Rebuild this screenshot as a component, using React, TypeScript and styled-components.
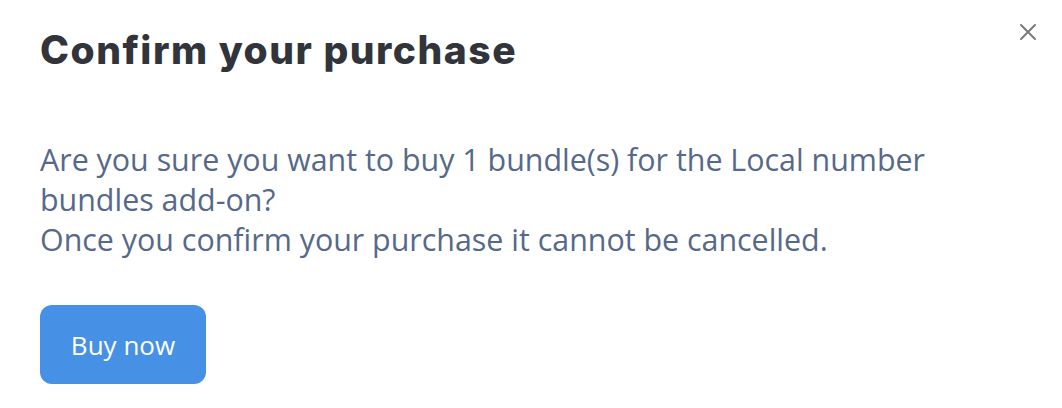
import React from "react";
import styled, { createGlobalStyle } from "styled-components";

const GlobalStyle = createGlobalStyle`
  html, body {
    margin: 0;
    padding: 0;
    background: #ffffff;
  }
`;

const Modal = styled.div`
  position: relative;
  width: 1062px;
  height: 408px;
  box-sizing: border-box;
  padding: 24px 40px 0 40px;
  background: #ffffff;
  display: flex;
  flex-direction: column;
`;

const Title = styled.h2`
  margin: 0;
  font-family: Inter, "Open Sans", sans-serif;
  font-weight: 800;
  font-size: 39px;
  line-height: 52px;
  color: #31343b;
  letter-spacing: 1.5px;
`;

const CloseButton = styled.button`
  position: absolute;
  top: 20px;
  right: 22px;
  width: 24px;
  height: 24px;
  padding: 0;
  border: none;
  background: transparent;
  cursor: pointer;
  display: flex;
  align-items: center;
  justify-content: center;
`;

const Message = styled.p`
  margin: 64px 0 0 0;
  font-family: "Open Sans", sans-serif;
  font-size: 30.4px;
  line-height: 40px;
  color: #56698a;
  max-width: 960px;
`;

const BuyButton = styled.button`
  margin-top: 45px;
  align-self: flex-start;
  width: 166px;
  height: 79px;
  border: none;
  border-radius: 12px;
  background: #4690e6;
  color: #ffffff;
  font-family: "Open Sans", sans-serif;
  font-size: 26px;
  cursor: pointer;
`;

const App: React.FC = () => {
  return (
    <>
      <GlobalStyle />
      <Modal>
        <CloseButton aria-label="Close">
          <svg width="18" height="18" viewBox="0 0 18 18">
            <path
              d="M2 2 L16 16 M16 2 L2 16"
              stroke="#7a7a7a"
              strokeWidth="2"
              strokeLinecap="round"
            />
          </svg>
        </CloseButton>
        <Title>Confirm your purchase</Title>
        <Message>
          Are you sure you want to buy 1 bundle(s) for the Local number
          bundles add-on?
          <br />
          Once you confirm your purchase it cannot be cancelled.
        </Message>
        <BuyButton>Buy now</BuyButton>
      </Modal>
    </>
  );
};

export default App;
